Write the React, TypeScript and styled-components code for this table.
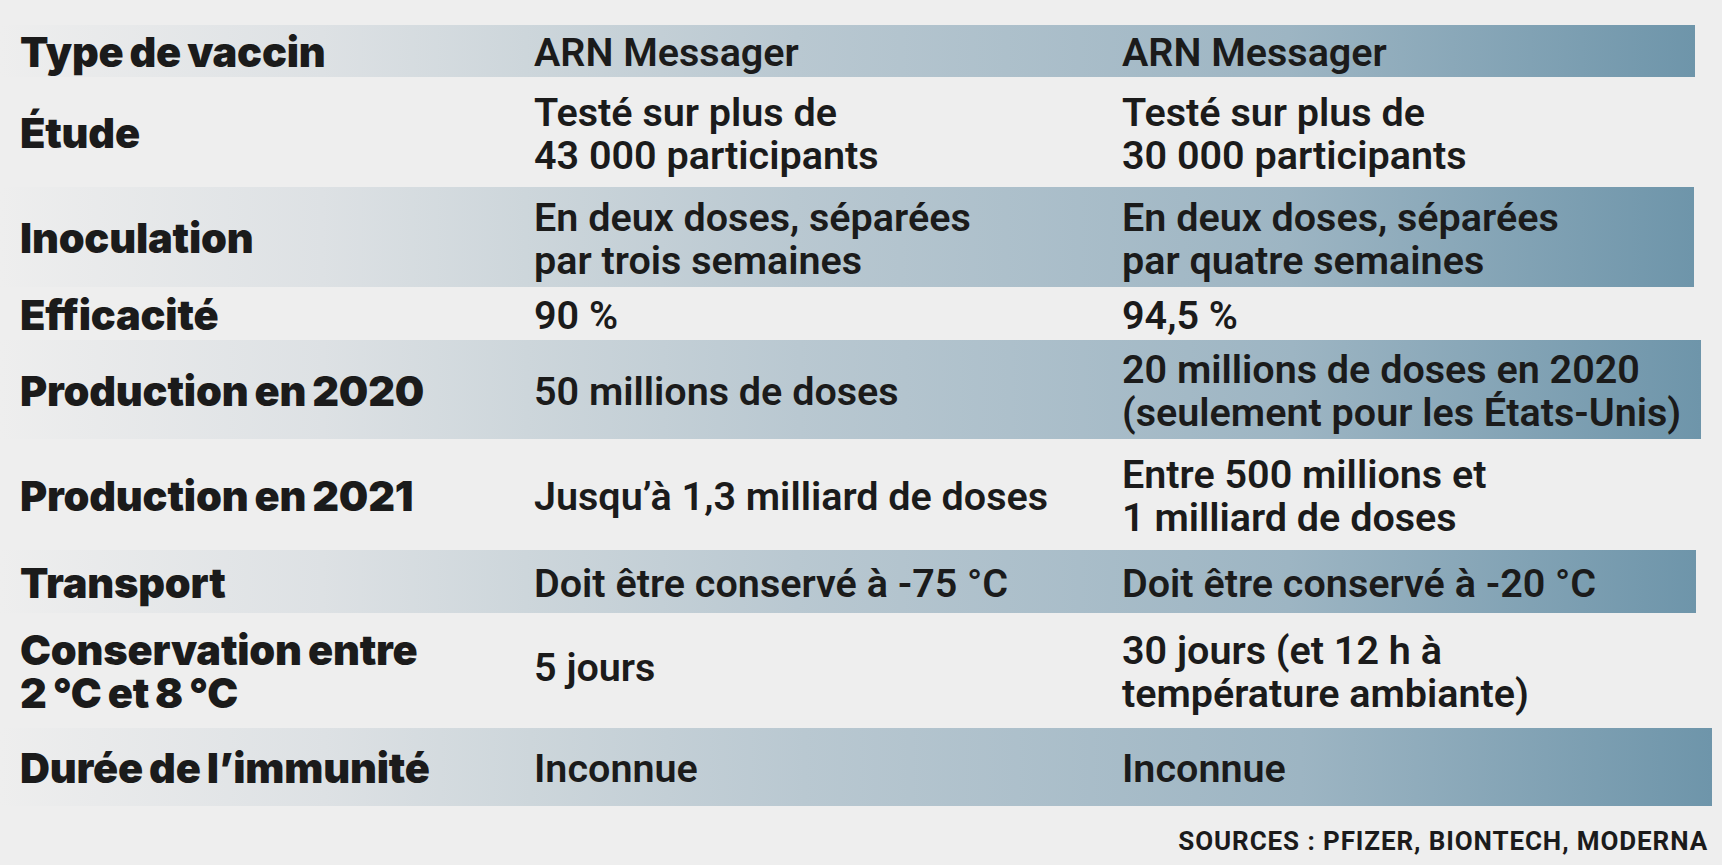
import styled, { createGlobalStyle } from 'styled-components';

const GlobalStyle = createGlobalStyle`
  html, body {
    margin: 0;
    padding: 0;
    background: #eeeeee;
  }
  body {
    width: 1722px;
    height: 865px;
    overflow: hidden;
  }
`;

type RowData = {
  label: string;
  a: string;
  b: string;
  band?: boolean;
  h: number;
  end?: number;
  aTop?: boolean;
};

const rows: RowData[] = [
  { label: 'Type de vaccin', a: 'ARN Messager', b: 'ARN Messager', band: true, h: 52, end: 1695 },
  {
    label: 'Étude',
    a: 'Testé sur plus de\n43\u00a0000 participants',
    b: 'Testé sur plus de\n30\u00a0000 participants',
    h: 110,
  },
  {
    label: 'Inoculation',
    a: 'En deux doses, séparées\npar trois semaines',
    b: 'En deux doses, séparées\npar quatre semaines',
    band: true,
    h: 100,
    end: 1694,
  },
  { label: 'Efficacité', a: '90\u00a0%', b: '94,5\u00a0%', h: 53 },
  {
    label: 'Production en 2020',
    a: '50 millions de doses',
    b: '20 millions de doses en 2020\n(seulement pour les États-Unis)',
    band: true,
    h: 99,
    end: 1701,
  },
  {
    label: 'Production en 2021',
    a: 'Jusqu’à 1,3 milliard de doses',
    b: 'Entre 500 millions et\n1 milliard de doses',
    h: 111,
  },
  {
    label: 'Transport',
    a: 'Doit être conservé à -75\u00a0°C',
    b: 'Doit être conservé à -20\u00a0°C',
    band: true,
    h: 63,
    end: 1696,
  },
  {
    label: 'Conservation entre\n2\u00a0°C et 8\u00a0°C',
    a: '5 jours',
    b: '30 jours (et 12 h à\ntempérature ambiante)',
    h: 115,
    aTop: true,
  },
  { label: 'Durée de l’immunité', a: 'Inconnue', b: 'Inconnue', band: true, h: 78, end: 1712 },
];

const App = () => {
  return (
    <>
      <GlobalStyle />
      <Page>
        <Table>
          {rows.map((row, idx) => (
            <Row key={idx} $band={!!row.band} $h={row.h} $end={row.end ?? 1695}>
              <Label>{row.label}</Label>
              <Value $top={!!row.aTop}>{row.a}</Value>
              <Value $top={false}>{row.b}</Value>
            </Row>
          ))}
        </Table>
        <Sources>SOURCES : PFIZER, BIONTECH, MODERNA</Sources>
      </Page>
    </>
  );
};

export default App;

const Page = styled.div`
  display: flex;
  flex-direction: column;
  padding-top: 25px;
  width: 1722px;
  color: #1b1b1b;
`;

const Table = styled.div`
  display: flex;
  flex-direction: column;
`;

const Row = styled.div<{ $band: boolean; $h: number; $end: number }>`
  display: grid;
  grid-template-columns: 514px 588px 1fr;
  align-items: center;
  box-sizing: border-box;
  width: ${({ $end }) => $end}px;
  height: ${({ $h }) => $h}px;
  padding-left: 20px;
  padding-top: 3px;
  background: ${({ $band }) =>
    $band
      ? 'linear-gradient(to right, #eeeeee 0%, #dde1e4 19%, #cdd6db 31%, #b9c8d1 47%, #9db5c3 76%, #6e95aa 100%)'
      : 'transparent'};
`;

const Label = styled.div`
  font-family: Inter, 'Liberation Sans', sans-serif;
  font-weight: 900;
  font-size: 41.5px;
  line-height: 43px;
  letter-spacing: -0.2px;
  word-spacing: -2px;
  white-space: pre-line;
`;

const Value = styled.div<{ $top: boolean }>`
  font-family: Roboto, 'Liberation Sans', sans-serif;
  font-weight: 600;
  font-size: 39.5px;
  line-height: 43px;
  letter-spacing: 0;
  white-space: pre-line;
  align-self: ${({ $top }) => ($top ? 'start' : 'center')};
  padding-top: ${({ $top }) => ($top ? '30px' : '0')};
`;

const Sources = styled.div`
  align-self: flex-end;
  margin-top: 20px;
  margin-right: 14px;
  font-family: Roboto, 'Liberation Sans', sans-serif;
  font-weight: 700;
  font-size: 26px;
  letter-spacing: 0.9px;
`;
